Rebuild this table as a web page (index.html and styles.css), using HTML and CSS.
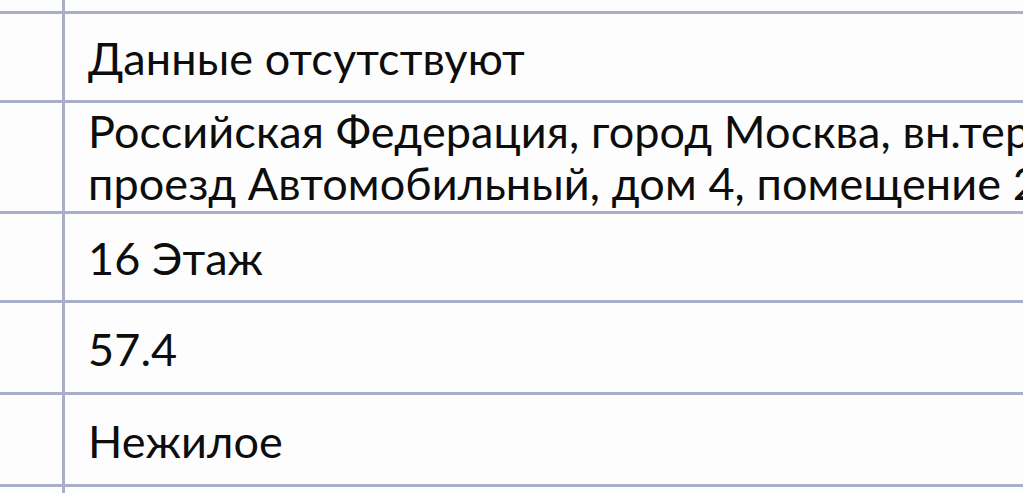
FILE: index.html
```html
<!DOCTYPE html>
<html lang="ru">
<head>
<meta charset="utf-8">
<title>Таблица</title>
<link rel="stylesheet" href="styles.css">
</head>
<body>
<div class="sheet">
  <div class="row row-top"><div class="label"></div><div class="value"></div></div>
  <div class="row"><div class="label"></div><div class="value">Данные отсутствуют</div></div>
  <div class="row row-double"><div class="label"></div><div class="value">Российская Федерация, город Москва, вн.тер.г. муниципальный округ Нижегородский,<br>проезд Автомобильный, дом 4, помещение 2/1</div></div>
  <div class="row"><div class="label"></div><div class="value">16 Этаж</div></div>
  <div class="row row-tall"><div class="label"></div><div class="value">57.4</div></div>
  <div class="row row-tall"><div class="label"></div><div class="value">Нежилое</div></div>
  <div class="row row-bottom"><div class="label"></div><div class="value"></div></div>
</div>
</body>
</html>
```
FILE: styles.css
```css
html, body {
  margin: 0;
  padding: 0;
  background: #fdfdfd;
  overflow: hidden;
}
.sheet {
  width: 2200px;
  font-family: Lato, "Noto Sans", sans-serif;
  font-size: 45px;
  letter-spacing: 0.1px;
  color: #0d0d0d;
}
.row {
  display: grid;
  grid-template-columns: 65px 1fr;
  border-bottom: 3px solid #a9afca;
  min-height: 86px;
}
.label {
  border-right: 3px solid #a9afca;
}
.value {
  display: flex;
  align-items: center;
  padding: 2px 0 0 23px;
  white-space: nowrap;
  line-height: 52px;
}
.row-top {
  min-height: 11px;
}
.row-top .value, .row-bottom .value {
  padding: 0;
}
.row-double {
  min-height: 108px;
}
.row-double .value {
  display: block;
  padding-top: 2px;
  padding-bottom: 2px;
}
.row-tall {
  min-height: 89px;
}
.row-bottom {
  min-height: 20px;
  border-bottom: none;
}
```
